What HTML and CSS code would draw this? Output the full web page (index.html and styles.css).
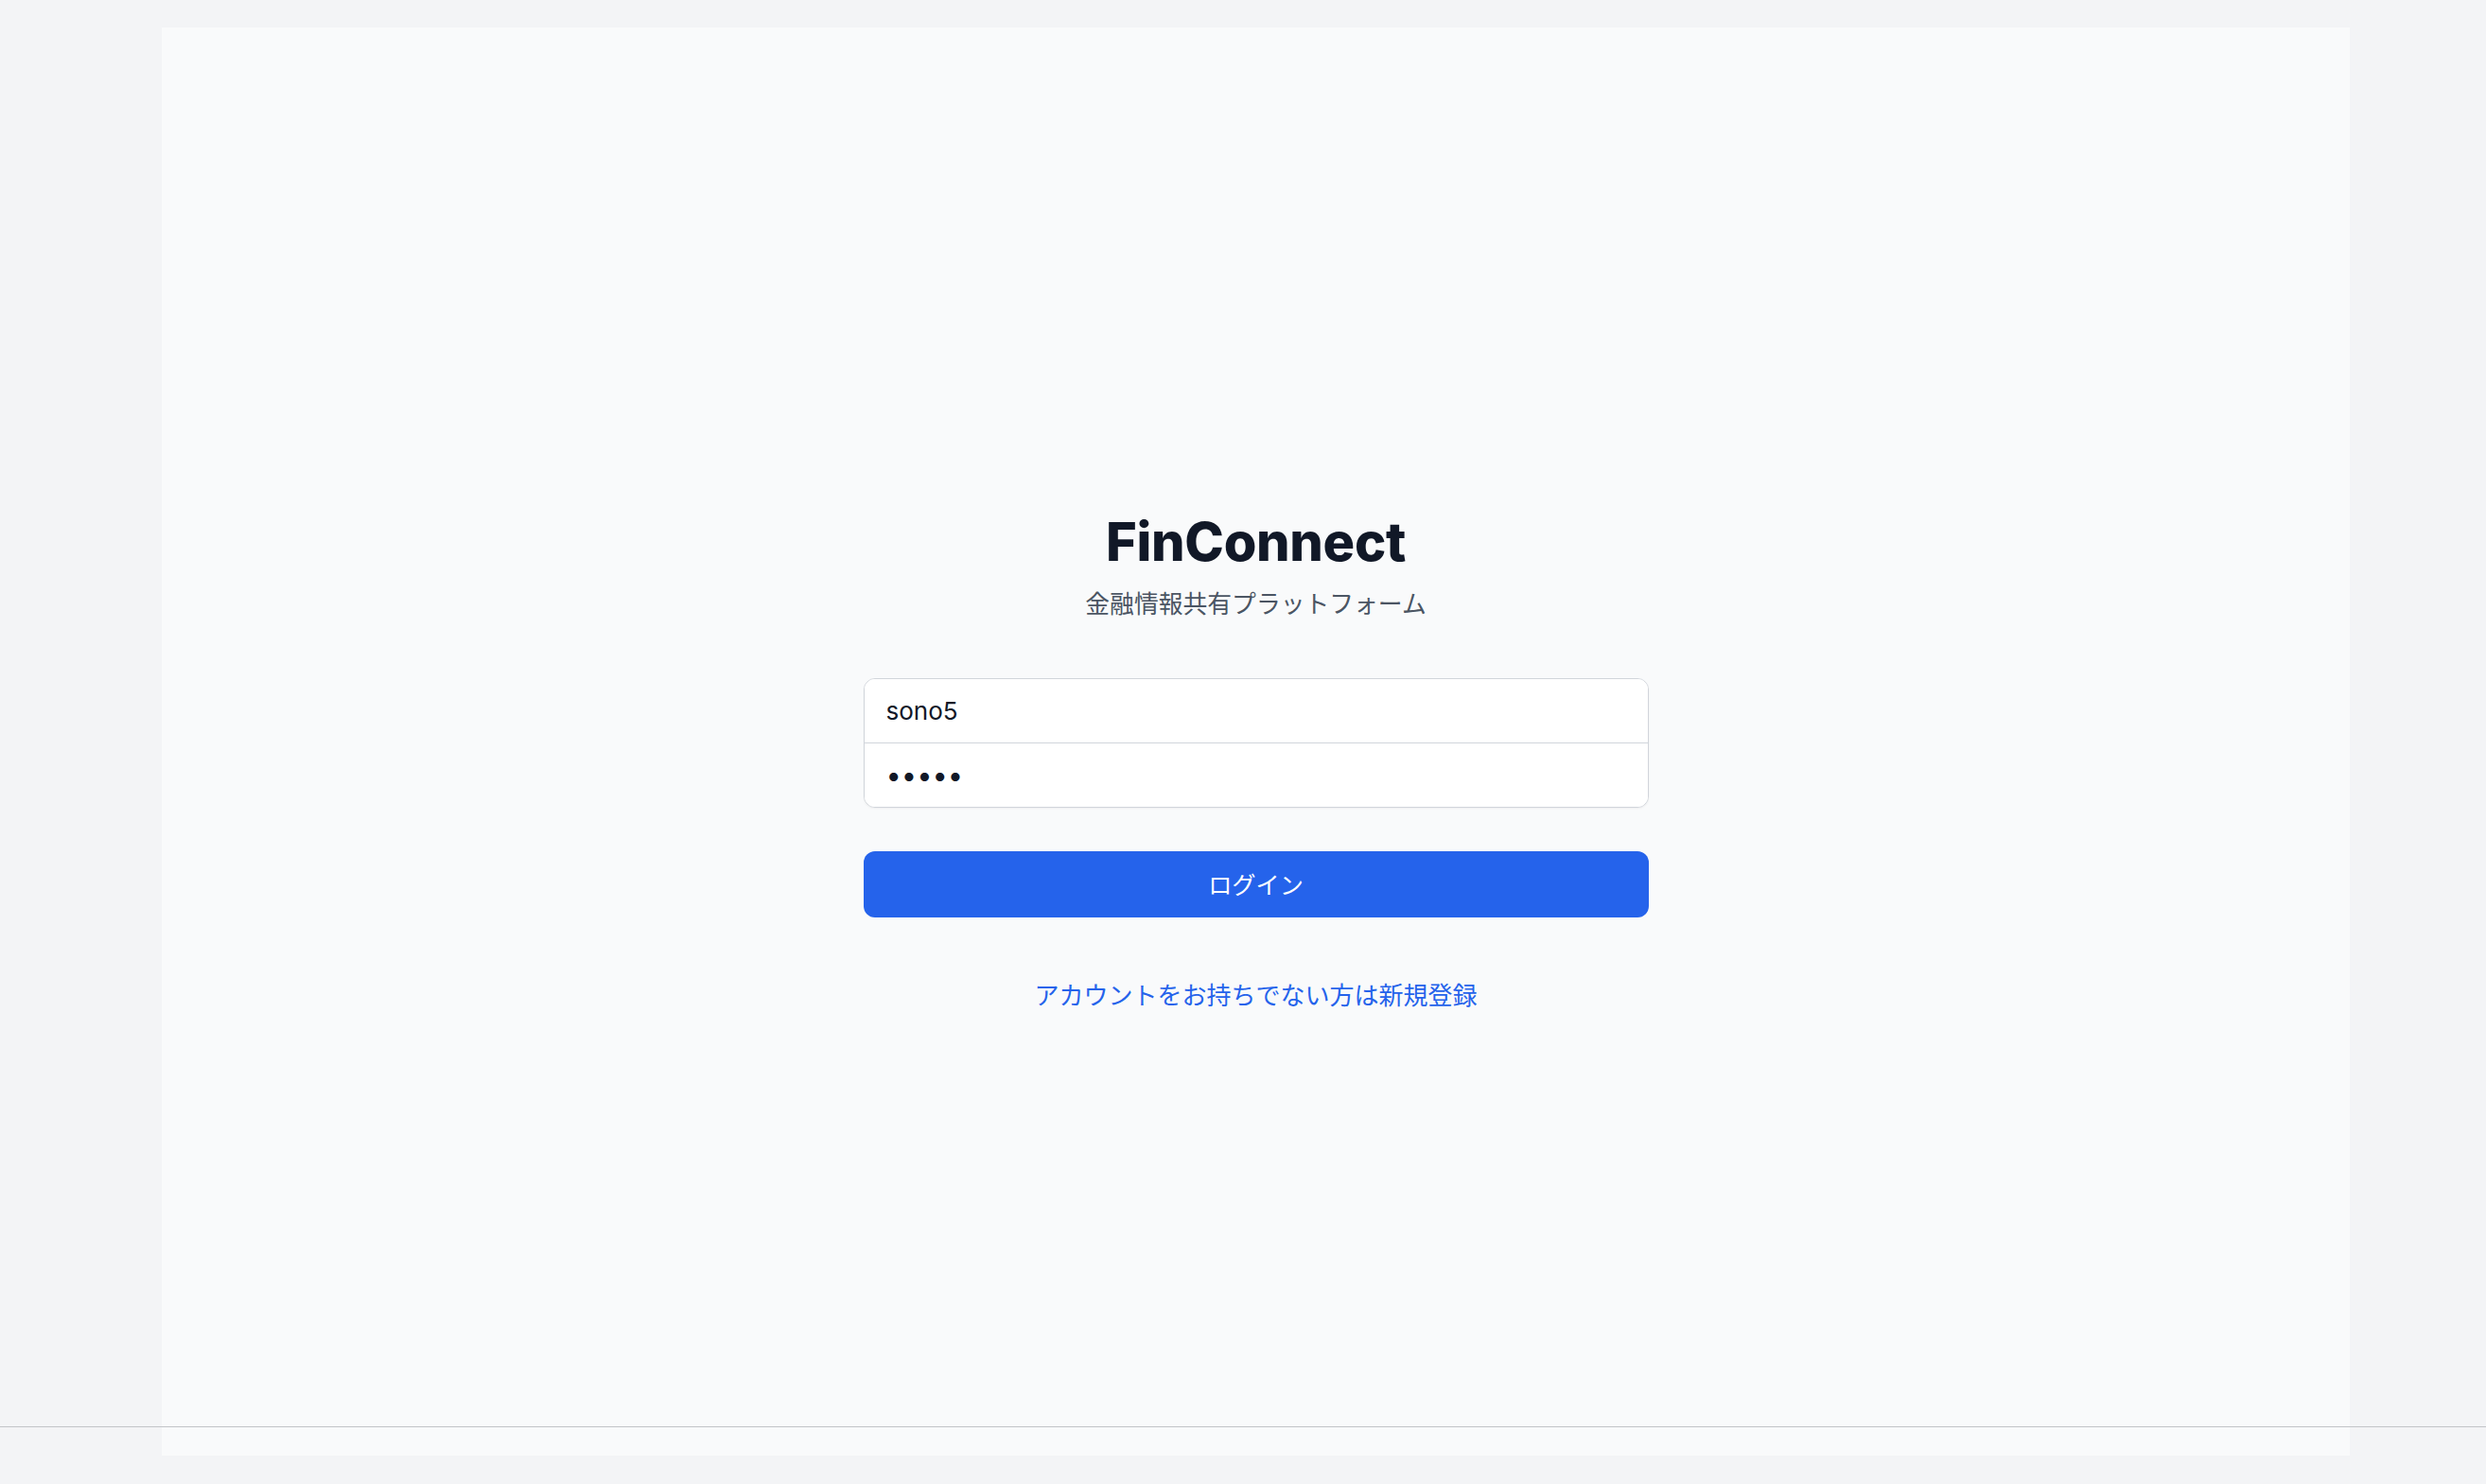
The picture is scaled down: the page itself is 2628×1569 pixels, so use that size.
FILE: index.html
```html
<!DOCTYPE html>
<html lang="ja">
<head>
<meta charset="utf-8">
<title>FinConnect</title>
<link rel="stylesheet" href="styles.css">
</head>
<body>
<main class="panel">
  <div class="login">
    <h1 class="title">FinConnect</h1>
    <p class="subtitle">金融情報共有プラットフォーム</p>
    <form class="form">
      <div class="fields">
        <input class="field" type="text" value="sono5">
        <input class="field field-password" type="password" value="abcde">
      </div>
      <button class="submit" type="button">ログイン</button>
    </form>
    <a class="register" href="#">アカウントをお持ちでない方は新規登録</a>
  </div>
</main>
<div class="rule"></div>
</body>
</html>
```

FILE: styles.css
```css
html, body {
  margin: 0;
  padding: 0;
}
body {
  background: #f3f4f6;
  height: 1569px;
  position: relative;
  overflow: hidden;
  font-family: "Noto Sans CJK JP", "Noto Sans", sans-serif;
}
.panel {
  margin: 29px 144px 0 171px;
  height: 1510px;
  background: #f9fafb;
  box-sizing: border-box;
  padding-top: 43px;
  display: flex;
  align-items: center;
  justify-content: center;
}
.login {
  width: 830px;
  display: flex;
  flex-direction: column;
  align-items: center;
}
.title {
  margin: 0;
  font-family: Inter, "Liberation Sans", sans-serif;
  font-weight: 800;
  font-size: 56px;
  line-height: 66px;
  color: #111827;
  letter-spacing: -0.3px;
}
.subtitle {
  margin: 11px 0 0;
  font-size: 25.8px;
  line-height: 40px;
  color: #4b5563;
}
.form {
  width: 100%;
  margin-top: 60px;
  display: flex;
  flex-direction: column;
}
.fields {
  border: 1px solid #d1d5db;
  border-radius: 12px;
  overflow: hidden;
  background: #fff;
  display: flex;
  flex-direction: column;
  box-shadow: 0 1px 2px rgba(0,0,0,0.05);
}
.field {
  height: 67px;
  border: 0;
  margin: 0;
  padding: 0 23px;
  font-family: Inter, "Liberation Sans", sans-serif;
  font-size: 26px;
  color: #111827;
  background: #fff;
  outline: none;
}
.field + .field {
  border-top: 1px solid #d1d5db;
}
.field-password {
  font-size: 29px;
  letter-spacing: 0;
}
.submit {
  margin-top: 46px;
  height: 70px;
  border: 0;
  border-radius: 12px;
  background: #2563eb;
  color: #fff;
  font-family: "Noto Sans CJK JP", "Noto Sans", sans-serif;
  font-size: 25.2px;
  line-height: 68px;
  padding: 0 0 2px;
}
.register {
  margin-top: 61px;
  font-size: 26px;
  line-height: 40px;
  color: #2563eb;
  text-decoration: none;
}
.rule {
  position: absolute;
  left: 0;
  right: 0;
  top: 1508px;
  height: 1px;
  background: #c2c4c8;
}
```
